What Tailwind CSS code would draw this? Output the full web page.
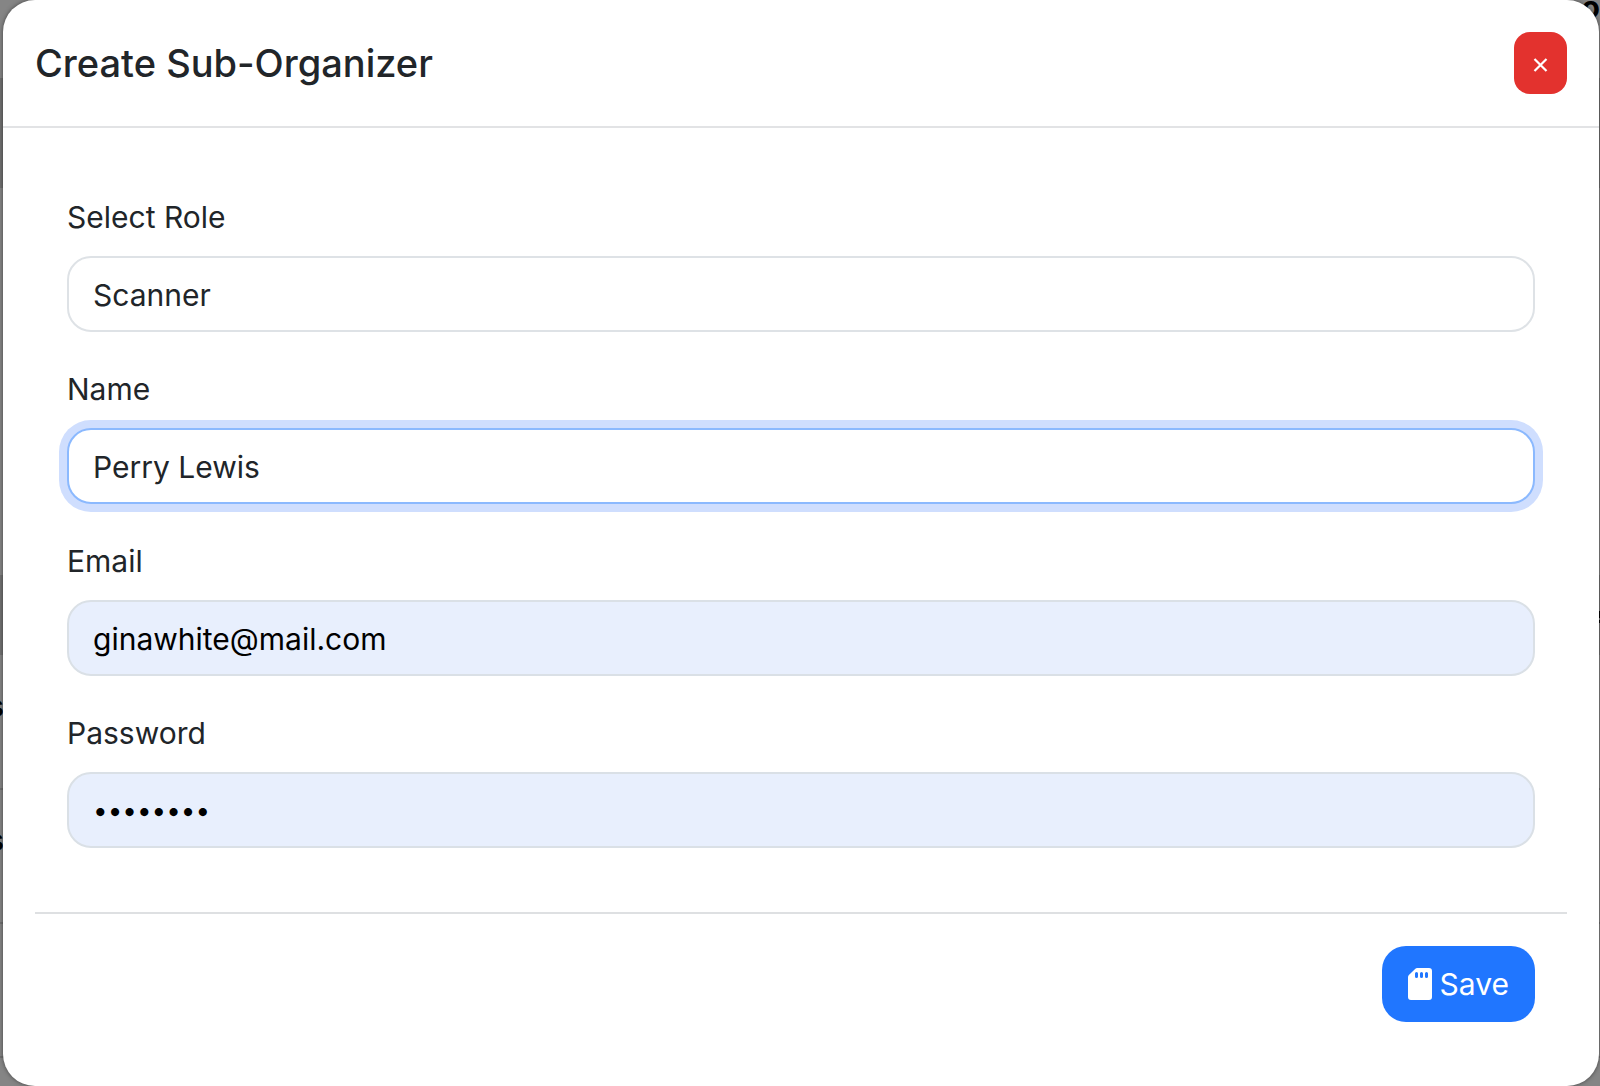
<!DOCTYPE html>
<html lang="en">
<head>
<meta charset="utf-8">
<meta name="viewport" content="width=device-width, initial-scale=1">
<title>Create Sub-Organizer</title>
<script src="https://cdn.jsdelivr.net/npm/@tailwindcss/browser@4"></script>
</head>
<body class="relative overflow-x-hidden bg-[#858585] font-['Inter',sans-serif] text-[30px] leading-[50px] text-[#212529]">
  <!-- Dimmed page behind the dialog -->
  <div class="absolute inset-0 overflow-hidden font-bold text-black" aria-hidden="true">
    <div class="absolute left-0 top-[78px] h-[110px] w-full bg-[#707070]"></div>
    <div class="absolute left-0 top-[575px] h-[80px] w-full bg-[#727272]"></div>
    <div class="absolute left-0 top-[788px] h-[2px] w-full bg-[#707070]"></div>
    <div class="absolute left-0 top-[922px] h-[2px] w-full bg-[#707070]"></div>
    <div class="absolute left-0 top-[1056px] h-[2px] w-full bg-[#707070]"></div>
    <div class="absolute right-0 top-[611px] h-[7px] w-px bg-black"></div>
    <div class="absolute right-0 top-[620px] h-[3px] w-px bg-black"></div>
    <span class="absolute -left-[13px] top-[681px]">s</span>
    <span class="absolute -left-[13px] top-[815px]">s</span>
    <span class="absolute -right-[12px] -top-[18px]">or</span>
  </div>

  <main role="dialog" aria-labelledby="dialog-title" class="relative ml-[3px] mr-px rounded-[32px] bg-white shadow-[0_0_4px_rgba(0,0,0,0.5)]">
    <header class="flex items-center justify-between border-b-2 border-[#e2e3e5] p-8">
      <h1 id="dialog-title" class="text-[38px] font-medium leading-[62px]">Create Sub-Organizer</h1>
      <button type="button" aria-label="Close" class="flex h-[62px] w-[53px] items-center justify-center rounded-2xl bg-[#e3322e] text-white">
        <svg class="mt-1 size-4" viewBox="0 0 16 16" fill="none" stroke="currentColor" stroke-width="2.2" aria-hidden="true"><path d="M1.500 2l12 12M13.500 2L1.500 14"/></svg>
      </button>
    </header>
    <form class="p-8">
      <div class="flex flex-col gap-8 p-8 pb-16">
        <div class="flex flex-col gap-[14px]">
          <label for="role">Select Role</label>
          <select id="role" class="h-19 w-full appearance-none rounded-3xl border-2 border-[#dee2e6] bg-white px-6 pt-px"><option>Scanner</option></select>
        </div>
        <div class="flex flex-col gap-[14px]">
          <label for="name">Name</label>
          <input id="name" type="text" value="Perry Lewis" class="h-19 w-full rounded-3xl border-2 border-[#8bb9fe] bg-white px-6 pt-px outline-none ring-8 ring-[#cfdefe]">
        </div>
        <div class="flex flex-col gap-[14px]">
          <label for="email">Email</label>
          <input id="email" type="email" value="ginawhite@mail.com" class="h-19 w-full rounded-3xl border-2 border-[#dae0e6] bg-[#e8effd] px-6 pt-px text-black">
        </div>
        <div class="flex flex-col gap-[14px]">
          <label for="password">Password</label>
          <input id="password" type="password" value="password" class="h-19 w-full rounded-3xl border-2 border-[#dae0e6] bg-[#e8effd] px-6 pt-px text-[26px] text-black">
        </div>
      </div>
      <div class="flex justify-end border-t-2 border-[#dee0e2] p-8">
        <button type="submit" class="flex h-19 items-center gap-2 rounded-3xl bg-[#2076ff] px-[26px] text-white">
          <svg class="h-8 w-6" viewBox="0 0 24 32" aria-hidden="true"><path fill="currentColor" fill-rule="evenodd" d="M9.200 0H21a3 3 0 0 1 3 3v26a3 3 0 0 1-3 3H3a3 3 0 0 1-3-3V9.200a3 3 0 0 1 .9-2.100L7.100.9A3 3 0 0 1 9.200 0zM8.500 4A1.500 1.500 0 0 0 7 5.500v3a1.500 1.500 0 0 0 3 0v-3A1.500 1.500 0 0 0 8.500 4zM13.500 4a1.500 1.500 0 0 0-1.500 1.500v3a1.500 1.500 0 0 0 3 0v-3A1.500 1.500 0 0 0 13.500 4zM18.500 4a1.500 1.500 0 0 0-1.500 1.500v3a1.500 1.500 0 0 0 3 0v-3A1.500 1.500 0 0 0 18.500 4z"/></svg>
          Save
        </button>
      </div>
    </form>
  </main>
</body>
</html>
